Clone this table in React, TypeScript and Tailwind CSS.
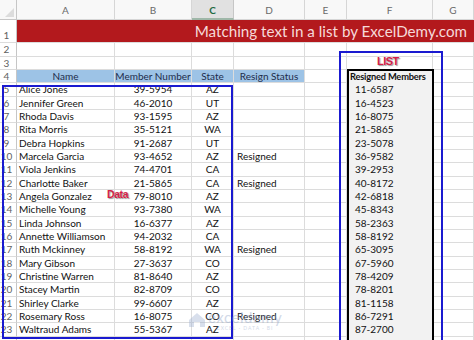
import React from "react";

const widths = [
  "w-[17px]",
  "w-[98px]",
  "w-[77px]",
  "w-[42px]",
  "w-[71px]",
  "w-[42px]",
  "w-[86px]",
  "w-[41px]",
];

const letters = ["A", "B", "C", "D", "E", "F", "G"];

const members: [string, string, string, string][] = [
  ["Alice Jones", "39-5954", "AZ", ""],
  ["Jennifer Green", "46-2010", "UT", ""],
  ["Rhoda Davis", "93-1595", "AZ", ""],
  ["Rita Morris", "35-5121", "WA", ""],
  ["Debra Hopkins", "91-2687", "UT", ""],
  ["Marcela Garcia", "93-4652", "AZ", "Resigned"],
  ["Viola Jenkins", "74-4701", "CA", ""],
  ["Charlotte Baker", "21-5865", "CA", "Resigned"],
  ["Angela Gonzalez", "79-8010", "AZ", ""],
  ["Michelle Young", "93-7380", "WA", ""],
  ["Linda Johnson", "16-6377", "AZ", ""],
  ["Annette Williamson", "94-2032", "CA", ""],
  ["Ruth Mckinney", "58-8192", "WA", "Resigned"],
  ["Mary Gibson", "27-3637", "CO", ""],
  ["Christine Warren", "81-8640", "AZ", ""],
  ["Stacey Martin", "82-8709", "CO", ""],
  ["Shirley Clarke", "99-6607", "AZ", ""],
  ["Rosemary Ross", "16-8075", "CO", "Resigned"],
  ["Waltraud Adams", "55-5367", "AZ", ""],
];

const resigned = [
  "11-6587", "16-4523", "16-8075", "21-5865", "23-5078", "36-9582", "39-2953",
  "40-8172", "42-6818", "45-8343", "58-2363", "58-8192", "65-3095", "67-5960",
  "78-4209", "78-8201", "81-1158", "86-7291", "87-2700",
];

const cell = "shrink-0 border-r border-b border-[#dcdcdc] flex items-center overflow-hidden whitespace-nowrap";

function RowNum({ n }: { n: number | string }) {
  return (
    <div className={`${widths[0]} ${cell} justify-center pr-[3px] border-r-[#c6c6c6] text-[#5f5f5f] bg-white`}>
      {n}
    </div>
  );
}

function Row({ n, cells }: { n: number; cells: React.ReactNode[] }) {
  return (
    <div className="flex h-[13.33px]">
      <RowNum n={n} />
      {cells}
    </div>
  );
}

export default function App() {
  const blank = (i: number, extra = "") => <div key={i} className={`${widths[i]} ${cell} ${extra}`} />;

  return (
    <div className="relative w-[474px] h-[340px] overflow-hidden bg-white text-[10px] leading-none text-[#111]" style={{ fontFamily: "Lato, 'Open Sans', sans-serif" }}>
      {/* column headers */}
      <div className="flex h-[20px] bg-[#f8f8f8]">
        <div className={`${widths[0]} shrink-0 border-r border-b border-[#c6c6c6] relative`}>
          <div className="absolute right-[2px] bottom-[2px] w-0 h-0 border-l-[9px] border-l-transparent border-b-[9px] border-b-[#dcdcdc]" />
        </div>
        {letters.map((l, i) =>
          l === "C" ? (
            <div key={l} className={`${widths[i + 1]} shrink-0 flex justify-center pt-[5px] bg-[#e1e1e1] border-r border-[#c6c6c6] border-b-2 border-b-[#9fb7a8] font-bold text-[#1f6b43]`}>
              {l}
            </div>
          ) : (
            <div key={l} className={`${widths[i + 1]} shrink-0 flex justify-center pt-[5px] border-r border-b border-[#d6d6d6] text-[#6a6a6a]`}>
              {l}
            </div>
          )
        )}
      </div>

      {/* row 1: title banner */}
      <div className="flex h-[23.33px]">
        <div className={`${widths[0]} ${cell} justify-center items-end pb-[2px] pr-[3px] border-r-[#c6c6c6] text-[#5f5f5f]`}>1</div>
        <div className="flex-1 flex items-center justify-end pr-[7px] bg-[#b3191d] text-[#f6d9d9] text-[15.2px] border-b border-[#dcdcdc]">
          Matching text in a list by ExcelDemy.com
        </div>
      </div>

      <Row n={2} cells={[1, 2, 3, 4, 5, 6, 7].map((i) => blank(i))} />
      <Row n={3} cells={[1, 2, 3, 4, 5, 6, 7].map((i) => blank(i))} />

      {/* row 4: headers */}
      <Row
        n={4}
        cells={[
          <div key="a" className={`${widths[1]} ${cell} justify-center bg-[#9dc3e6] border-[#9dc3e6] text-[#1d2c4c]`}>Name</div>,
          <div key="b" className={`${widths[2]} ${cell} justify-center bg-[#9dc3e6] border-[#9dc3e6] text-[#1d2c4c]`}>Member Number</div>,
          <div key="c" className={`${widths[3]} ${cell} justify-center bg-[#9dc3e6] border-[#9dc3e6] text-[#1d2c4c]`}>State</div>,
          <div key="d" className={`${widths[4]} ${cell} justify-center bg-[#9dc3e6] border-[#9dc3e6] border-b-[#dcdcdc] text-[#1d2c4c]`}>Resign Status</div>,
          blank(5),
          <div key="f" className={`${widths[6]} ${cell} pl-[3px] bg-[#f2f2f2] border-[#f2f2f2] font-bold text-[9.3px] tracking-[-0.2px]`}>Resigned Members</div>,
          blank(7),
        ]}
      />

      {members.map(([name, num, state, status], r) => (
        <Row
          key={name}
          n={r + 5}
          cells={[
            <div key="a" className={`${widths[1]} ${cell} pl-[2px]`}>{name}</div>,
            <div key="b" className={`${widths[2]} ${cell} justify-center`}>{num}</div>,
            <div key="c" className={`${widths[3]} ${cell} justify-center`}>{state}</div>,
            <div key="d" className={`${widths[4]} ${cell} pl-[3px]`}>{status}</div>,
            blank(5),
            <div key="f" className={`${widths[6]} ${cell} pl-[8px] bg-[#f2f2f2] border-[#f2f2f2]`}>{resigned[r]}</div>,
            blank(7),
          ]}
        />
      ))}

      <Row n={24} cells={[1, 2, 3, 4, 5, 6, 7].map((i) => blank(i, i === 6 ? "bg-[#f2f2f2] border-[#f2f2f2]" : ""))} />

      {/* overlays */}
      <div className="absolute left-[2px] top-[85px] w-[231px] h-[254px] border-2 border-[#1a1ad0]" />
      <div className="absolute left-[339px] top-[51px] w-[104px] h-[300px] border-2 border-[#1a1ad0]" />
      <div className="absolute left-[347px] top-[69px] w-[87px] h-[300px] border-2 border-black" />

      <div
        className="absolute left-[377px] top-[56px] text-[11px] font-bold tracking-[-0.5px] text-[#d61f48] [text-shadow:1px_1px_1px_#9a9a9a]"
        style={{ fontFamily: "'Liberation Sans', Arial, sans-serif" }}
      >
        LIST
      </div>
      <div
        className="absolute left-[107px] top-[189px] text-[10.5px] font-bold tracking-[-0.4px] text-[#d61f48] [text-shadow:1px_1px_1px_#9a9a9a]"
        style={{ fontFamily: "'Liberation Sans', Arial, sans-serif" }}
      >
        Data
      </div>

      {/* watermark */}
      <div className="absolute left-[188px] top-[310px] flex items-start gap-[2px] opacity-40 text-[#8ea2c6]">
        <svg width="18" height="16" viewBox="0 0 18 16" className="mt-[2px]">
          <path d="M1 8 9 1l8 7v7H1z" fill="#9fb0d0" />
          <path d="M6 15v-5h6v5" fill="#ffffff" />
        </svg>
        <div className="flex flex-col items-center">
          <span className="text-[15px] leading-[15px] tracking-[0.5px]">exceldemy</span>
          <span className="text-[5px] tracking-[1px] mt-[1px]">EXCEL · DATA · BI</span>
        </div>
      </div>
    </div>
  );
}
